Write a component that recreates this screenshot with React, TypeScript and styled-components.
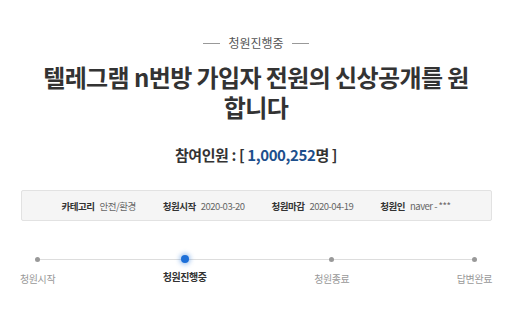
import React from "react";
import styled, { createGlobalStyle } from "styled-components";

const GlobalStyle = createGlobalStyle`
  html, body {
    margin: 0;
    padding: 0;
    background: #fff;
  }
  body {
    font-family: "Noto Sans CJK KR", "Noto Sans", sans-serif;
    color: #333;
  }
`;

interface Step {
  label: string;
  active?: boolean;
}

const steps: Step[] = [
  { label: "청원시작" },
  { label: "청원진행중", active: true },
  { label: "청원종료" },
  { label: "답변완료" },
];

const info = [
  { label: "카테고리", value: "안전/환경" },
  { label: "청원시작", value: "2020-03-20" },
  { label: "청원마감", value: "2020-04-19" },
  { label: "청원인", value: "naver - ***" },
];

export default function App() {
  return (
    <Page>
      <GlobalStyle />
      <Status>청원진행중</Status>
      <Title>텔레그램 n번방 가입자 전원의 신상공개를 원 합니다</Title>
      <Count>
        참여인원 : [ <Number>1,000,252</Number>명 ]
      </Count>
      <InfoBox>
        {info.map((item) => (
          <InfoItem key={item.label}>
            <InfoLabel>{item.label}</InfoLabel>
            <InfoValue>{item.value}</InfoValue>
          </InfoItem>
        ))}
      </InfoBox>
      <Track>
        {steps.map((step) => (
          <StepItem key={step.label}>
            <Dot $active={step.active} />
            <StepLabel $active={step.active}>{step.label}</StepLabel>
          </StepItem>
        ))}
      </Track>
    </Page>
  );
}

const Page = styled.div`
  width: 512px;
  height: 330px;
  padding-top: 33px;
  box-sizing: border-box;
  display: flex;
  flex-direction: column;
  align-items: center;
`;

const Status = styled.div`
  display: flex;
  align-items: center;
  gap: 8px;
  font-size: 12px;
  line-height: 20px;
  color: #555;

  &::before,
  &::after {
    content: "";
    width: 17px;
    height: 1px;
    background: #999;
  }
`;

const Title = styled.h1`
  margin: 9px 0 0;
  width: 440px;
  text-align: center;
  font-size: 24px;
  line-height: 30px;
  font-weight: 700;
  letter-spacing: -0.6px;
  color: #333;
`;

const Count = styled.div`
  margin-top: 22px;
  font-size: 15px;
  line-height: 22px;
  font-weight: 700;
  color: #333;
  letter-spacing: -0.4px;
`;

const Number = styled.span`
  color: #1d4f8c;
`;

const InfoBox = styled.div`
  margin-top: 24px;
  width: 471px;
  height: 31px;
  box-sizing: border-box;
  border: 1px solid #e2e2e2;
  border-radius: 2px;
  background: #f5f5f5;
  display: flex;
  align-items: center;
  justify-content: center;
  gap: 27px;
  font-size: 9.5px;
  letter-spacing: -0.5px;
`;

const InfoItem = styled.div`
  display: flex;
  align-items: center;
  gap: 5px;
`;

const InfoLabel = styled.span`
  font-weight: 700;
  color: #333;
`;

const InfoValue = styled.span`
  color: #666;
`;

const Track = styled.div`
  position: relative;
  margin-top: 33px;
  width: 472px;
  display: flex;
  justify-content: space-between;

  &::before {
    content: "";
    position: absolute;
    left: 16px;
    right: 16px;
    top: 5px;
    height: 1px;
    background: #ddd;
  }
`;

const StepItem = styled.div`
  position: relative;
  display: flex;
  flex-direction: column;
  align-items: center;
  gap: 7px;
`;

const Dot = styled.span<{ $active?: boolean }>`
  width: ${(p) => (p.$active ? 8 : 5)}px;
  height: ${(p) => (p.$active ? 8 : 5)}px;
  margin-top: ${(p) => (p.$active ? 1 : 3)}px;
  margin-bottom: ${(p) => (p.$active ? 0 : 3)}px;
  border-radius: 50%;
  background: ${(p) => (p.$active ? "#1d6fd8" : "#999")};
  box-shadow: ${(p) => (p.$active ? "0 0 4px 2px rgba(29,111,216,0.35)" : "none")};
`;

const StepLabel = styled.span<{ $active?: boolean }>`
  font-size: 10px;
  line-height: 14px;
  letter-spacing: -0.4px;
  font-weight: ${(p) => (p.$active ? 700 : 400)};
  color: ${(p) => (p.$active ? "#333" : "#999")};
`;
